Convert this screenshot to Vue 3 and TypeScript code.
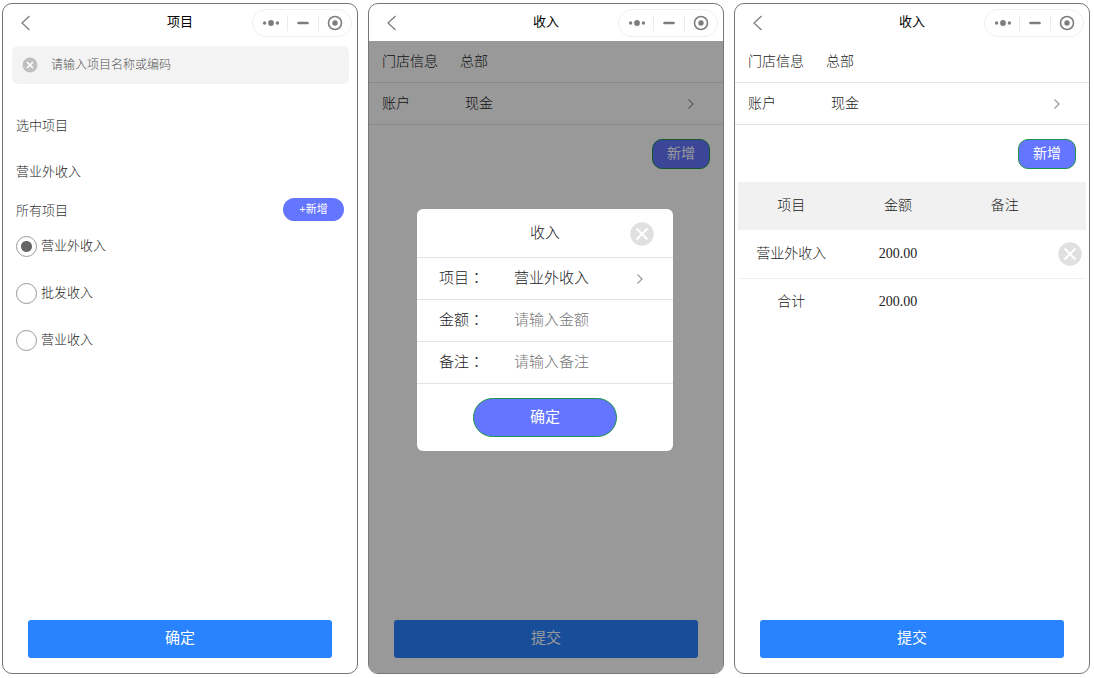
<script setup lang="ts">
import { ref } from 'vue'

type ScreenKind = 'picker' | 'dialog' | 'summary'

interface Screen {
  kind: ScreenKind
  title: string
  action: string
}

const screens: Screen[] = [
  { kind: 'picker', title: '项目', action: '确定' },
  { kind: 'dialog', title: '收入', action: '提交' },
  { kind: 'summary', title: '收入', action: '提交' },
]

const options: string[] = ['营业外收入', '批发收入', '营业收入']
const selected = ref<string>('营业外收入')
const keyword = ref<string>('')
const amount = ref<string>('')
const remark = ref<string>('')
</script>

<template>
  <main class="board">
    <section v-for="screen in screens" :key="screen.kind" class="phone">
      <header class="bar">
        <button class="plain back" type="button" aria-label="返回">
          <svg width="10" height="16" viewBox="0 0 10 16" fill="none" stroke="#7a7a7a" stroke-width="1.2">
            <path d="M8.500 1 1 8l7.500 7" />
          </svg>
        </button>
        <h1 class="title">{{ screen.title }}</h1>
        <div class="capsule">
          <button class="plain cap" type="button" aria-label="更多">
            <svg width="18" height="8" viewBox="0 0 18 8" fill="#7d7d7d">
              <circle cx="2.600" cy="4" r="1.700" />
              <circle cx="9" cy="4" r="2.900" />
              <circle cx="15.400" cy="4" r="1.700" />
            </svg>
          </button>
          <button class="plain cap" type="button" aria-label="最小化">
            <svg width="12" height="4" viewBox="0 0 12 4" fill="none" stroke="#7d7d7d" stroke-width="2.400" stroke-linecap="round">
              <path d="M1.400 2h9.200" />
            </svg>
          </button>
          <button class="plain cap" type="button" aria-label="关闭">
            <svg width="16" height="16" viewBox="0 0 16 16">
              <circle cx="8" cy="8" r="6.500" fill="none" stroke="#7d7d7d" stroke-width="1.600" />
              <circle cx="8" cy="8" r="2.700" fill="#7d7d7d" />
            </svg>
          </button>
        </div>
      </header>

      <div class="body">
        <template v-if="screen.kind === 'picker'">
          <div class="search">
            <button class="plain clear" type="button" aria-label="清除" @click="keyword = ''">
              <svg width="16" height="16" viewBox="0 0 16 16">
                <circle cx="8" cy="8" r="7.500" fill="#bfbfbf" />
                <path d="M5 5l6 6M11 5l-6 6" stroke="#fff" stroke-width="1.700" />
              </svg>
            </button>
            <input v-model="keyword" class="field small" type="text" aria-label="项目名称或编码" placeholder="请输入项目名称或编码" />
          </div>
          <div class="items">
            <h2 class="caption">选中项目</h2>
            <p class="current">{{ selected }}</p>
            <div class="all">
              <h2 class="caption">所有项目</h2>
              <button class="chip" type="button">+新增</button>
            </div>
            <label v-for="option in options" :key="option" class="option">
              <input v-model="selected" class="radio" type="radio" name="item" :value="option" />
              <span>{{ option }}</span>
            </label>
          </div>
        </template>

        <template v-else>
          <div class="row">
            <span class="name">门店信息</span>
            <span>总部</span>
          </div>
          <div class="row">
            <span class="name">账户</span>
            <button class="plain choose account" type="button">
              <span>现金</span>
              <svg class="arrow" width="8" height="12" viewBox="0 0 8 12" fill="none" stroke="#999" stroke-width="1.200">
                <path d="M1.500 1.500 6 6l-4.500 4.500" />
              </svg>
            </button>
          </div>
          <div class="tools">
            <button class="add" type="button">新增</button>
          </div>
          <div v-if="screen.kind === 'summary'" class="sheet">
            <table class="ledger">
              <thead>
                <tr>
                  <th scope="col">项目</th>
                  <th scope="col">金额</th>
                  <th scope="col">备注</th>
                  <td class="last"></td>
                </tr>
              </thead>
              <tbody>
                <tr>
                  <td>营业外收入</td>
                  <td class="number">200.00</td>
                  <td></td>
                  <td class="last">
                    <button class="plain remove" type="button" aria-label="删除">
                      <svg width="24" height="24" viewBox="0 0 24 24">
                        <circle cx="12" cy="12" r="11.700" fill="#e0e0e0" />
                        <path d="M6.500 6.500l11 11M17.500 6.500l-11 11" stroke="#fff" stroke-width="2" />
                      </svg>
                    </button>
                  </td>
                </tr>
                <tr>
                  <td>合计</td>
                  <td class="number">200.00</td>
                  <td></td>
                  <td class="last"></td>
                </tr>
              </tbody>
            </table>
          </div>
        </template>

        <button class="submit" type="button">{{ screen.action }}</button>

        <div v-if="screen.kind === 'dialog'" class="mask">
          <form class="dialog" role="dialog" aria-label="收入" @submit.prevent>
            <div class="head">
              <h2 class="heading">收入</h2>
              <button class="plain close" type="button" aria-label="关闭">
                <svg width="24" height="24" viewBox="0 0 24 24">
                  <circle cx="12" cy="12" r="11.700" fill="#e0e0e0" />
                  <path d="M6.500 6.500l11 11M17.500 6.500l-11 11" stroke="#fff" stroke-width="2" />
                </svg>
              </button>
            </div>
            <div class="line">
              <label class="term" for="entry-item">项目<span class="colon">：</span></label>
              <button id="entry-item" class="plain choose" type="button">
                <span>{{ selected }}</span>
                <svg class="arrow" width="8" height="12" viewBox="0 0 8 12" fill="none" stroke="#999" stroke-width="1.200">
                  <path d="M1.500 1.500 6 6l-4.500 4.500" />
                </svg>
              </button>
            </div>
            <div class="line">
              <label class="term" for="entry-amount">金额<span class="colon">：</span></label>
              <input id="entry-amount" v-model="amount" class="field" type="text" placeholder="请输入金额" />
            </div>
            <div class="line">
              <label class="term" for="entry-remark">备注<span class="colon">：</span></label>
              <input id="entry-remark" v-model="remark" class="field" type="text" placeholder="请输入备注" />
            </div>
            <button class="confirm" type="submit">确定</button>
          </form>
        </div>
      </div>
    </section>
  </main>
</template>

<style>
body {
  margin: 0;
  background: #fff;
}
</style>

<style scoped>
* {
  box-sizing: border-box;
}

.board {
  display: grid;
  grid-template-columns: repeat(3, minmax(0, 1fr));
  gap: 10px;
  min-height: 100vh;
  padding: 3px 4px 4px 2px;
  font-family: "Liberation Sans", "Noto Sans CJK SC", sans-serif;
  font-size: 14px;
  font-weight: 300;
  line-height: 20px;
  color: #222;
}

.phone {
  display: flex;
  flex-direction: column;
  overflow: hidden;
  border: 1px solid #777;
  border-radius: 10px;
  background: #fff;
}

h1,
h2,
p {
  margin: 0;
  font-weight: inherit;
}

button,
input {
  font: inherit;
  color: inherit;
}

button {
  cursor: pointer;
}

svg {
  display: block;
}

.plain {
  padding: 0;
  border: 0;
  background: none;
}

.bar {
  display: grid;
  grid-template-columns: 1fr auto 1fr;
  align-items: center;
  height: 37px;
  padding: 0 5px 0 18px;
}

.back {
  justify-self: start;
}

.title {
  padding: 0 13px 2px 0;
  font-size: 13px;
  font-weight: 400;
  color: #000;
}

.capsule {
  justify-self: end;
  display: flex;
  align-items: center;
  width: 100px;
  height: 28px;
  padding: 0 1px 0 3px;
  border: 1px solid #f0f0f0;
  border-radius: 14px;
}

.cap {
  display: flex;
  flex: 1;
  align-items: center;
  justify-content: center;
  height: 16px;
}

.cap + .cap {
  border-left: 1px solid #ebebeb;
}

.body {
  position: relative;
  display: flex;
  flex: 1;
  flex-direction: column;
}

.search {
  display: flex;
  align-items: center;
  gap: 13px;
  height: 38px;
  margin: 5px 8px 0 9px;
  padding: 0 10px;
  border-radius: 6px;
  background: #f3f3f3;
}

.field {
  flex: 1;
  min-width: 0;
  padding: 0;
  border: 0;
  outline: 0;
  background: none;
}

.field::placeholder {
  color: #777;
  opacity: 1;
}

.small {
  font-size: 12px;
}

.small::placeholder {
  color: #555;
}

.items {
  display: flex;
  flex-direction: column;
  padding: 32px 13px 0;
  font-size: 13px;
}

.caption {
  font-size: 13px;
  color: #333;
}

.current {
  margin-top: 26px;
}

.all {
  display: flex;
  align-items: flex-start;
  justify-content: space-between;
  height: 25px;
  margin-top: 16px;
}

.all .caption {
  line-height: 25px;
}

.chip {
  width: 61px;
  height: 23px;
  padding: 0;
  border: 0;
  border-radius: 12px;
  background: #6475ff;
  font-size: 11px;
  font-weight: 400;
  line-height: 23px;
  color: #fff;
}

.option {
  display: flex;
  align-items: center;
  gap: 4px;
  height: 47px;
}

.option span {
  padding-bottom: 2px;
}

.radio {
  width: 21px;
  height: 21px;
  margin: 0;
  border: 1px solid #999;
  border-radius: 50%;
  appearance: none;
  background: #fff;
}

.radio:checked {
  background: radial-gradient(circle, #666 0 5px, #fff 6px);
}

.row {
  display: flex;
  align-items: center;
  height: 42px;
  padding: 0 13px;
  border-bottom: 1px solid #e4e4e4;
}

.row span,
.line span,
.line .term {
  padding-bottom: 2px;
}

.name {
  width: 78px;
}

.choose {
  display: flex;
  flex: 1;
  align-items: center;
  justify-content: space-between;
}

.account {
  padding: 0 15px 0 5px;
}

.tools {
  display: flex;
  justify-content: flex-end;
  padding: 14px 13px 13px;
}

.add {
  width: 58px;
  height: 30px;
  padding: 0 0 2px;
  border: 1px solid #1f944b;
  border-radius: 10px;
  background: #6475ff;
  font-weight: 400;
  line-height: 26px;
  color: #fff;
}

.sheet {
  padding: 0 3px;
}

.ledger {
  width: 100%;
  border-collapse: collapse;
  table-layout: fixed;
}

.ledger th,
.ledger td {
  height: 48px;
  padding: 0 0 2px;
  font-weight: inherit;
  text-align: center;
}

.ledger thead {
  background: #f1f1f1;
}

.ledger tbody tr:first-child {
  border-bottom: 1px solid #f1f1f1;
}

.ledger .last {
  width: 8%;
  padding: 0;
}

.remove {
  display: block;
}

.ledger .number {
  padding: 0;
  font-family: "Liberation Serif", serif;
  font-weight: 400;
}

.submit {
  height: 38px;
  margin: auto 25px 15px;
  padding: 0 0 2px;
  border: 0;
  border-radius: 3px;
  background: #2983ff;
  font-size: 15px;
  font-weight: 400;
  color: #fff;
}

.mask {
  position: absolute;
  inset: 0;
  display: flex;
  align-items: flex-start;
  padding: 168px 50px 0 48px;
  background: rgba(0, 0, 0, 0.4);
}

.dialog {
  display: flex;
  flex: 1;
  flex-direction: column;
  min-width: 0;
  border-radius: 6px;
  background: #fff;
  font-size: 15px;
}

.head {
  display: grid;
  grid-template-columns: 1fr auto 1fr;
  align-items: center;
  height: 49px;
  padding: 2px 19px 0;
  border-bottom: 1px solid #e4e4e4;
}

.heading {
  grid-column: 2;
  padding-bottom: 2px;
  font-size: 15px;
}

.close {
  justify-self: end;
}

.line {
  display: flex;
  align-items: center;
  height: 42px;
  padding: 0 29px 0 22px;
  border-bottom: 1px solid #e4e4e4;
}

.line .field {
  padding-bottom: 2px;
}

.term {
  width: 75px;
}

.colon {
  font-family: "Noto Sans CJK TC", sans-serif;
}

.confirm {
  width: 56%;
  height: 39px;
  margin: 14px auto;
  padding: 0 0 2px;
  border: 1px solid #1f944b;
  border-radius: 20px;
  background: #6475ff;
  font-weight: 400;
  color: #fff;
}
</style>
